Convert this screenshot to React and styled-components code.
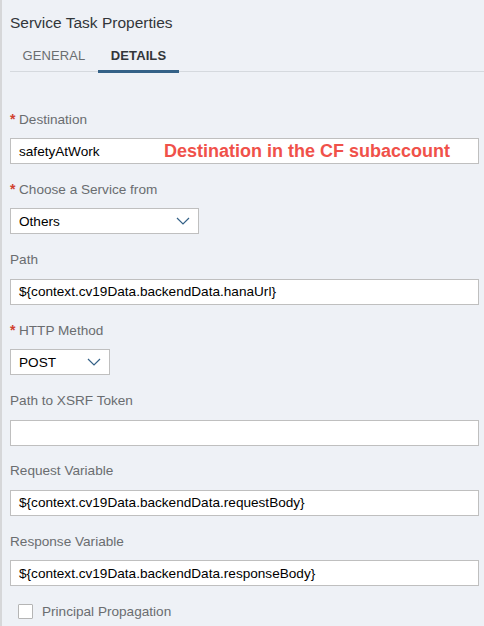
import React from "react";
import styled, { createGlobalStyle } from "styled-components";

const Global = createGlobalStyle`
  html, body { margin: 0; padding: 0; background: #eef1f6; }
  body { font-family: "Liberation Sans", Arial, sans-serif; }
  * { box-sizing: border-box; }
`;

const Panel = styled.div`
  width: 484px;
  height: 626px;
  background: #eef1f6;
  border-left: 2px solid #d6d7d9;
  padding: 0 0 0 8px;
  overflow: hidden;
`;

const Title = styled.h1`
  margin: 0;
  padding-top: 14px;
  height: 34px;
  font-size: 15.5px;
  font-weight: 400;
  color: #32363a;
  line-height: 18px;
`;

const TabBar = styled.div`
  display: flex;
  align-items: stretch;
  border-bottom: 1px solid #d5d9de;
  height: 38px;
`;

const Tab = styled.div`
  display: flex;
  align-items: flex-start;
  justify-content: center;
  width: ${(p) => (p.$active ? "81px" : "88px")};
  padding-top: 14px;
  line-height: 15px;
  font-size: 13px;
  letter-spacing: 0.1px;
  font-weight: ${(p) => (p.$active ? 700 : 400)};
  color: ${(p) => (p.$active ? "#32363a" : "#6a6d70")};
  border-bottom: 3px solid ${(p) => (p.$active ? "#346187" : "transparent")};
  margin-bottom: -2px;
`;

const Form = styled.div`
  display: flex;
  flex-direction: column;
  padding-top: 38px;
  padding-right: 5px;
`;

const Field = styled.div`
  display: flex;
  flex-direction: column;
  height: 70.4px;
`;

const Label = styled.label`
  display: flex;
  align-items: center;
  height: 18px;
  margin-bottom: 10px;
  font-size: 13.6px;
  color: #6a6d70;
`;

const Star = styled.span`
  color: #d0402e;
  font-weight: 700;
  margin-right: 2px;
  width: 7px;
  font-size: 14px;
`;

const Input = styled.div`
  position: relative;
  display: flex;
  align-items: center;
  width: ${(p) => p.$width || "100%"};
  height: 26px;
  background: #fff;
  border: 1px solid #bfbfbf;
  padding: 0 8px;
  font-size: 13.6px;
  color: #000;
`;

const Value = styled.span`
  flex: 1;
`;

const Note = styled.span`
  position: absolute;
  left: 153px;
  top: 2px;
  font-family: "Liberation Sans", Arial, sans-serif;
  font-weight: 700;
  font-size: 18px;
  color: #f0514a;
`;

const CheckRow = styled.div`
  display: flex;
  align-items: center;
  height: 18px;
  margin-top: 0;
  padding-left: 8px;
  gap: 9px;
  font-size: 13.6px;
  color: #6a6d70;
`;

const Box = styled.span`
  width: 15px;
  height: 15px;
  background: #fff;
  border: 1px solid #b5b5b5;
  border-radius: 1px;
`;

const Chevron = () => (
  <svg width="14" height="8" viewBox="0 0 14 8" fill="none">
    <path d="M1 1l6 6 6-6" stroke="#346187" strokeWidth="1.2" />
  </svg>
);

export default function App() {
  return (
    <>
      <Global />
      <Panel>
        <Title>Service Task Properties</Title>
        <TabBar>
          <Tab>GENERAL</Tab>
          <Tab $active>DETAILS</Tab>
        </TabBar>
        <Form>
          <Field>
            <Label><Star>*</Star>Destination</Label>
            <Input>
              <Value>safetyAtWork</Value>
              <Note>Destination in the CF subaccount</Note>
            </Input>
          </Field>
          <Field>
            <Label><Star>*</Star>Choose a Service from</Label>
            <Input $width="189px">
              <Value>Others</Value>
              <Chevron />
            </Input>
          </Field>
          <Field>
            <Label>Path</Label>
            <Input>
              <Value>{"${context.cv19Data.backendData.hanaUrl}"}</Value>
            </Input>
          </Field>
          <Field>
            <Label><Star>*</Star>HTTP Method</Label>
            <Input $width="100px">
              <Value>POST</Value>
              <Chevron />
            </Input>
          </Field>
          <Field>
            <Label>Path to XSRF Token</Label>
            <Input />
          </Field>
          <Field>
            <Label>Request Variable</Label>
            <Input>
              <Value>{"${context.cv19Data.backendData.requestBody}"}</Value>
            </Input>
          </Field>
          <Field>
            <Label>Response Variable</Label>
            <Input>
              <Value>{"${context.cv19Data.backendData.responseBody}"}</Value>
            </Input>
          </Field>
          <CheckRow>
            <Box />
            Principal Propagation
          </CheckRow>
        </Form>
      </Panel>
    </>
  );
}
